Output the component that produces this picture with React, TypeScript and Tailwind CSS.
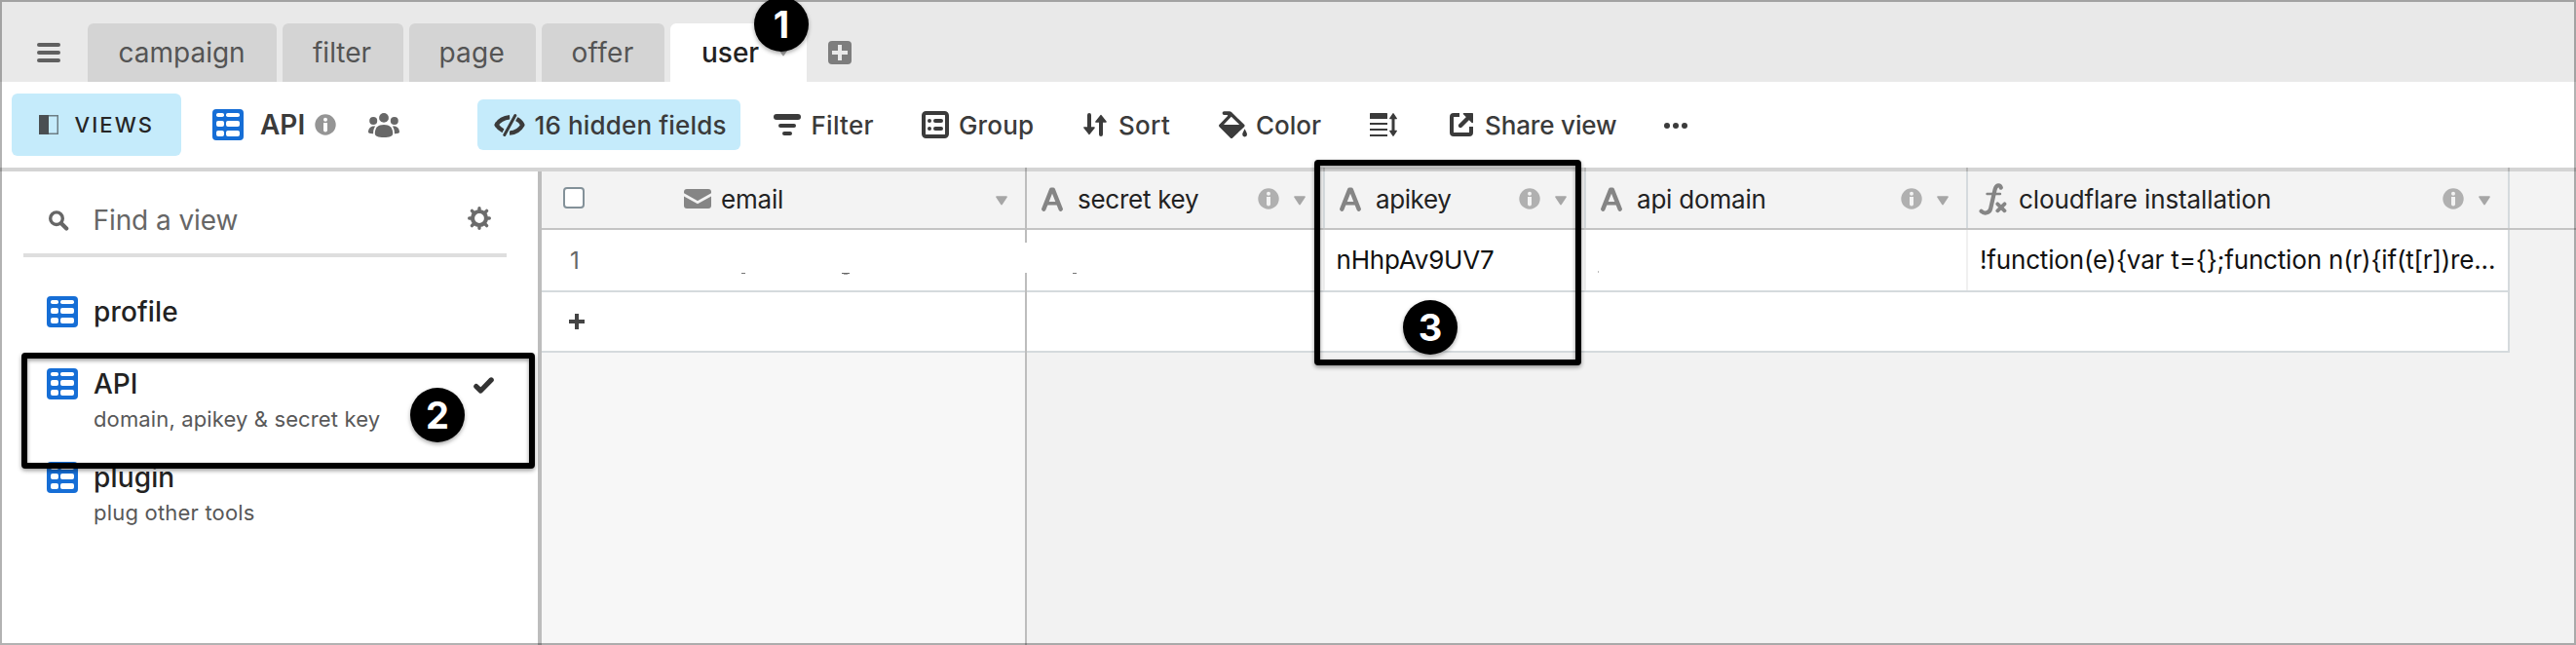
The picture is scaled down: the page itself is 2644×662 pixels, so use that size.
import React, { type ReactNode } from "react";

function TableIcon() {
  return (
    <svg width="32" height="32" viewBox="0 0 32 32" className="shrink-0">
      <rect width="32" height="32" rx="4" fill="#166ed6" />
      <g fill="#fff">
        <rect x="4" y="4" width="8" height="4" rx="1.8" />
        <rect x="14" y="4" width="14" height="4" rx="1.8" />
        <rect x="4" y="12" width="8" height="6" rx="2" />
        <rect x="14" y="12" width="14" height="6" rx="2" />
        <rect x="4" y="22" width="8" height="6" rx="2" />
        <rect x="14" y="22" width="14" height="6" rx="2" />
      </g>
    </svg>
  );
}

function InfoIcon({ color, ink }: { color: string; ink: string }) {
  return (
    <svg width="22" height="22" viewBox="0 0 22 22" className="shrink-0">
      <circle cx="11" cy="11" r="10.7" fill={color} />
      <circle cx="11" cy="5.8" r="2" fill={ink} />
      <path d="M9 9h4v7.6a2 2 0 0 1-4 0z" fill={ink} />
    </svg>
  );
}

function Caret() {
  return (
    <svg width="12" height="10" viewBox="0 0 12 10" className="shrink-0">
      <path d="M1 .3h10c.8 0 1.1.7.7 1.3L6.9 8.8c-.5.8-1.3.8-1.8 0L.3 1.6C-.1 1 .2.3 1 .3z" fill="#a6a6a6" />
    </svg>
  );
}

function TextFieldIcon() {
  return (
    <svg width="22" height="25" viewBox="0 0 22 25" className="mb-[2px] shrink-0" fill="none" stroke="#858585" strokeWidth="4.4" strokeLinecap="round" strokeLinejoin="round">
      <path d="M2.3 22.6 10.2 2.6h1.6l7.9 20" />
      <path d="M5.5 16.8h11" strokeWidth="3.6" />
    </svg>
  );
}

function FormulaIcon() {
  return (
    <svg width="29" height="33" viewBox="0 0 29 33" className="mb-[1px] shrink-0" fill="none" stroke="#858585" strokeLinecap="round">
      <path d="M22.8 4.6C22 1.6 18 .8 16.6 6.5L12.2 26C11.2 30.6 6 32 2.6 28.8" strokeWidth="4.2" />
      <path d="M8.5 11h13.5" strokeWidth="2.4" />
      <path d="m19.3 21.3 7.2 7M26.5 21.3l-7.2 7" strokeWidth="3.8" />
    </svg>
  );
}

function Tab({ label, className }: { label: string; className: string }) {
  return (
    <div className={`flex h-[60px] shrink-0 items-center rounded-t-[6px] text-[28px] ${className}`}>
      <span>{label}</span>
    </div>
  );
}

function Tool({ icon, label, className, textClass }: { icon: ReactNode; label?: string; className: string; textClass?: string }) {
  return (
    <div className={`flex shrink-0 items-center whitespace-nowrap text-[26px] font-medium text-[#3b3b3b] ${className}`}>
      {icon}
      {label && <span className={textClass}>{label}</span>}
    </div>
  );
}

function HeaderCell({ icon, label, className, labelClass }: { icon: ReactNode; label: string; className: string; labelClass: string }) {
  return (
    <div className={`relative flex h-[58px] shrink-0 items-center border-r-2 border-[#d5dadd] pr-[18px] text-[26px] text-[#222] ${className}`}>
      <span className="absolute -top-1 -right-0.5 h-1 w-0.5 bg-black/15" />
      {icon}
      <span className={`mb-[2px] flex-1 whitespace-nowrap ${labelClass}`}>{label}</span>
      <span className="mb-[3px] mr-[15px] flex">
        <InfoIcon color="#b0b0b0" ink="#f3f3f3" />
      </span>
      <span className="mt-[2px] flex">
        <Caret />
      </span>
    </div>
  );
}

function ViewItem({ name, note, nameClass, noteClass, className, checked }: { name: string; note?: string; nameClass: string; noteClass?: string; className: string; checked?: boolean }) {
  return (
    <div className={`relative shrink-0 ${className}`}>
      <div className="flex h-8 items-center">
        <TableIcon />
        <span className={`ml-4 flex-1 text-[28px] font-medium text-[#222] ${nameClass}`}>{name}</span>
        {checked && (
          <svg width="21" height="17" viewBox="0 0 21 17" className="mr-[45px] mt-[3px]" fill="none" stroke="#333" strokeWidth="5.2" strokeLinecap="round" strokeLinejoin="round">
            <path d="M2.8 9.6 7.4 14 18.2 2.9" />
          </svg>
        )}
      </div>
      {note && <div className={`ml-12 mt-1 h-8 text-[22px] leading-8 text-[#585858] ${noteClass}`}>{note}</div>}
    </div>
  );
}

function Badge({ n, className }: { n: number; className: string }) {
  return (
    <div className={`absolute z-20 flex h-14 w-14 items-center justify-center rounded-full bg-black text-[38px] font-bold text-white shadow-[0_2px_4px_rgba(0,0,0,0.35)] ${className}`}>
      {n}
    </div>
  );
}

function Highlight({ className }: { className: string }) {
  return <div className={`absolute z-10 rounded-[4px] border-[6px] border-black drop-shadow-[0_2px_2px_rgba(0,0,0,0.4)] ${className}`} />;
}

export default function App() {
  return (
    <div className="relative flex h-[662px] w-[2644px] flex-col overflow-hidden bg-white font-['Inter',sans-serif]">
      <div className="flex h-[84px] shrink-0 items-end bg-[#e9e9e9] text-[#545454]">
        <div className="flex h-[60px] w-[90px] items-center pl-[38px]">
          <svg width="24" height="20" viewBox="0 0 24 20" fill="#606060">
            <rect width="24" height="4" rx="2" />
            <rect y="8" width="24" height="4" rx="2" />
            <rect y="16" width="24" height="4" rx="2" />
          </svg>
        </div>
        <div className="flex gap-[6px]">
          <Tab label="campaign" className="w-[194px] bg-[#d4d4d4] pl-[31.5px]" />
          <Tab label="filter" className="w-[124px] bg-[#d4d4d4] pl-[31px]" />
          <Tab label="page" className="w-[130px] bg-[#d4d4d4] pl-[30.5px] tracking-[0.2px]" />
          <Tab label="offer" className="w-[126px] bg-[#d4d4d4] pl-[30.5px] tracking-[0.3px]" />
          <div className="relative">
            <Tab label="user" className="w-[140px] bg-white pl-[32px] font-medium text-[#222]" />
            <span className="absolute left-[110px] top-[24px] flex">
              <Caret />
            </span>
            <Badge n={1} className="-top-[27px] left-[86px]" />
          </div>
        </div>
        <div className="ml-[22px] flex h-[60px] items-center">
          <svg width="24" height="24" viewBox="0 0 24 24">
            <rect width="24" height="24" rx="4" fill="#7d7d7d" />
            <path d="M12 4v16M4 12h16" stroke="#e9e9e9" strokeWidth="4" />
          </svg>
        </div>
      </div>

      <div className="flex h-[92px] shrink-0 items-center border-b-4 border-[#d4d4d4] bg-white pl-3">
        <div className="flex h-16 w-[174px] items-center rounded-[6px] bg-[#c5ebfb] pl-7">
          <svg width="20" height="20" viewBox="0 0 20 20">
            <rect x="0.75" y="0.75" width="18.5" height="18.5" fill="none" stroke="#6c7d84" strokeWidth="1.5" />
            <rect width="10" height="20" rx="0.5" fill="#4a4f52" />
          </svg>
          <span className="ml-[16.5px] text-[22px] font-medium tracking-[2.1px] text-[#262626]">VIEWS</span>
        </div>
        <div className="ml-8 flex w-[160px] items-center">
          <TableIcon />
          <span className="ml-[17px] w-[56px] text-[28px] font-semibold text-[#3b3b3b]">API</span>
          <InfoIcon color="#959595" ink="#fff" />
        </div>
        <div className="w-[112px]">
          <svg width="32" height="25" viewBox="0 0 32 25" fill="#676767">
            <circle cx="16" cy="4.9" r="4.9" />
            <circle cx="5.2" cy="8" r="4" />
            <circle cx="26.8" cy="8" r="4" />
            <path d="M16 12c6 0 9.2 3.2 9.2 9 0 2.8-3.2 4-9.2 4s-9.2-1.2-9.2-4c0-5.8 3.2-9 9.2-9z" />
            <path d="M7.2 13.6C3 12.8 0 15.5 0 19.6c0 1.4 2 1.8 5.1 1.7 0-3.2.5-5.5 2.1-7.7z" />
            <path d="M24.8 13.6c4.2-.8 7.2 1.9 7.2 6 0 1.4-2 1.8-5.1 1.7 0-3.2-.5-5.5-2.1-7.7z" />
          </svg>
        </div>
        <Tool
          className="h-[52px] w-[270px] rounded-[6px] bg-[#c5ebfb] pl-[17px]"
          label="16 hidden fields"
          textClass="ml-[9.5px] tracking-[0.15px]"
          icon={
            <svg width="32" height="23" viewBox="0 0 32 23" fill="none" stroke="#3b3b3b" strokeWidth="4.4">
              <path d="M16.2 3.2C10.5 3.8 5 6.8 2.6 11.2c1.6 2.7 4 4.6 7 6.2" strokeLinejoin="round" />
              <path d="M22.5 4.8c3.2 1.4 5.5 3.6 6.9 6.4-2.6 4.7-7.4 8-13.4 8.3" strokeLinejoin="round" />
              <path d="M21.8 1.6 10.8 21.4" stroke="#c5ebfb" strokeWidth="6" />
              <path d="M21.8 1.6 10.8 21.4" strokeWidth="3" strokeLinecap="round" />
            </svg>
          }
        />
        <Tool
          className="ml-[34px] w-[152px]"
          label="Filter"
          textClass="ml-[10.5px] tracking-[0.26px]"
          icon={
            <svg width="28" height="22" viewBox="0 0 28 22" fill="#3b3b3b">
              <rect width="28" height="6" rx="3" />
              <rect x="5" y="10" width="18" height="4" rx="2" />
              <rect x="9" y="18" width="10" height="4" rx="2" />
            </svg>
          }
        />
        <Tool
          className="w-[166px]"
          label="Group"
          textClass="ml-[10px] tracking-[0.16px]"
          icon={
            <svg width="28" height="28" viewBox="0 0 28 28" fill="#3b3b3b">
              <rect x="2" y="2" width="24" height="24" rx="2.5" fill="none" stroke="#3b3b3b" strokeWidth="4" />
              <circle cx="8" cy="10" r="2" />
              <circle cx="8" cy="18" r="2" />
              <rect x="12" y="8" width="10" height="4" rx="2" />
              <rect x="12" y="16" width="10" height="4" rx="2" />
            </svg>
          }
        />
        <Tool
          className="w-[139px]"
          label="Sort"
          textClass="ml-[12px] tracking-[0.3px]"
          icon={
            <svg width="24" height="24" viewBox="0 0 24 24" fill="#3b3b3b" stroke="#3b3b3b" strokeLinecap="round" strokeLinejoin="round">
              <path d="M6 2v15M18 22V8" strokeWidth="4" />
              <path d="M1 15h10L6 21.3zM13 9h10l-5-6.3z" strokeWidth="1.6" />
            </svg>
          }
        />
        <Tool
          className="w-[155px]"
          label="Color"
          textClass="ml-[9px]"
          icon={
            <svg width="29" height="28" viewBox="0 0 29 28" fill="#3b3b3b">
              <path d="M5.5.2h5.3c1 0 1.7.3 2.4 1L26 13.8c.8.8.8 1.6 0 2.4L14.2 27.4c-.8.8-1.6.8-2.4 0L.6 16.2c-.8-.8-.8-1.6 0-2.4L9.3 4.7 8.6 4H5.5a1.9 1.9 0 0 1 0-3.8zM12.8 5.8 5 14h16.2z" />
              <path d="M26.6 18.2c1.5 2.8 2.4 4.4 2.4 5.8a2.4 2.4 0 0 1-4.8 0c0-1.4.9-3 2.4-5.8z" />
            </svg>
          }
        />
        <Tool
          className="w-[82px]"
          icon={
            <svg width="28" height="24" viewBox="0 0 28 24" fill="#3b3b3b">
              <rect width="18" height="6" rx="0.5" />
              <rect y="10" width="18" height="2" />
              <rect y="16" width="18" height="2" />
              <rect y="22" width="18" height="2" />
              <path d="M22.5 4h3v16h-3z" />
              <path d="M20.8 5.6 24 .8l3.2 4.8zM20.800 18.400l3.200 4.800 3.200-4.800z" stroke="#3b3b3b" strokeWidth="1.4" strokeLinejoin="round" />
            </svg>
          }
        />
        <Tool
          className="w-[220px]"
          label="Share view"
          textClass="ml-[12px] tracking-[-0.14px]"
          icon={
            <svg width="24" height="24" viewBox="0 0 24 24" fill="none" stroke="#3b3b3b" strokeWidth="4">
              <path d="M10 2H4a2 2 0 0 0-2 2v16a2 2 0 0 0 2 2h16a2 2 0 0 0 2-2v-6" />
              <path d="m11 13 8-8" strokeWidth="4.4" strokeLinecap="round" />
              <path d="M14.5.8h8.700v8.700z" fill="#3b3b3b" strokeWidth="1.6" strokeLinejoin="round" />
            </svg>
          }
        />
        <Tool
          className="w-6"
          icon={
            <svg width="24" height="6" viewBox="0 0 24 6" fill="#3b3b3b" className="mt-[2px]">
              <circle cx="3" cy="3" r="3" />
              <circle cx="12" cy="3" r="3" />
              <circle cx="21" cy="3" r="3" />
            </svg>
          }
        />
      </div>

      <div className="flex min-h-0 flex-1">
        <aside className="relative flex w-[556px] shrink-0 flex-col border-r-4 border-[#bdbdbd] bg-white pl-6">
          <div className="flex h-[88px] w-[496px] items-center border-b-4 border-[#dedede] pl-[26px] pt-[12px]">
            <svg width="21" height="21" viewBox="0 0 21 21" className="mt-[5px]" fill="none" stroke="#666">
              <circle cx="8" cy="8.2" r="6.3" strokeWidth="3.4" />
              <path d="m13.2 13.4 5 5" strokeWidth="4.2" strokeLinecap="round" />
            </svg>
            <span className="ml-[24.5px] mt-[3px] flex-1 text-[28px] tracking-[-0.08px] text-[#666]">Find a view</span>
            <svg width="24" height="24" viewBox="-12 -12 24 24" className="mr-[16px]" fill="none" stroke="#6b6b6b">
              <circle r="7" strokeWidth="4.2" />
              <path d="M0-8.5V-10.300M0 8.500v1.800M-8.500 0h-1.800M8.500 0h1.800M-6-6l-1.600-1.600M6-6l1.600-1.600M-6 6l-1.600 1.600M6 6l1.600 1.600" strokeWidth="3.4" strokeLinecap="round" />
            </svg>
          </div>
          <div className="flex flex-col pl-6 pt-10">
            <ViewItem name="profile" nameClass="tracking-[0.15px]" className="h-[74px]" />
            <ViewItem name="API" nameClass="" note="domain, apikey & secret key" noteClass="tracking-[0.13px]" className="h-24" checked />
            <ViewItem name="plugin" nameClass="tracking-[0.15px]" note="plug other tools" noteClass="tracking-[0.2px]" className="h-24" />
          </div>
          <Highlight className="left-[22px] top-[186px] h-[119px] w-[527px]" />
          <Badge n={2} className="left-[421px] top-[222px]" />
        </aside>

        <section className="relative flex w-[498px] shrink-0 flex-col border-r-2 border-[#bdbdbd] bg-[#f7f7f7]">
          <span className="absolute -right-0.5 -top-1 h-1 w-0.5 bg-black/20" />
          <div className="flex h-[60px] shrink-0 items-center border-b-2 border-[#c4c4c4] bg-[#f3f3f3] pl-[22px] pr-[18px]">
            <span className="mb-[4px] h-[22px] w-[22px] rounded-[4px] border-2 border-[#839199] bg-white" />
            <svg width="28" height="20" viewBox="0 0 28 20" className="mb-[2px] ml-[102px]">
              <rect width="28" height="20" rx="3" fill="#858585" />
              <path d="M-1 5.2 14 13.7 29 5.2" fill="none" stroke="#f3f3f3" strokeWidth="2.8" />
            </svg>
            <span className="mb-[2px] ml-[10px] flex-1 text-[26px] tracking-[-0.2px] text-[#222]">email</span>
            <span className="mt-[2px] flex">
              <Caret />
            </span>
          </div>
          <div className="relative flex h-16 shrink-0 items-center border-b-2 border-[#d5dadd] bg-white pl-[29px]">
            <span className="mt-[2px] text-[24px] text-[#666]">1</span>
            <span className="absolute left-[205px] top-[44px] h-px w-1 bg-[#777]" />
            <span className="absolute left-[308px] top-[44px] h-px w-2 bg-[#666]" />
            <span className="absolute left-[310px] top-[45px] h-px w-1 bg-[#aaa]" />
            <span className="absolute -right-0.5 top-[13px] h-[31px] w-0.5 bg-white" />
          </div>
          <div className="flex h-[62px] shrink-0 items-center border-b-2 border-[#d5dadd] bg-white pl-[28px]">
            <svg width="16" height="16" viewBox="0 0 16 16">
              <path d="M8 0v16M0 8h16" stroke="#444" strokeWidth="4" />
            </svg>
          </div>
        </section>

        <section className="relative flex flex-1 flex-col bg-[#f2f2f2]">
          <div className="flex h-[60px] shrink-0 border-b-2 border-[#c4c4c4] bg-[#f3f3f3]">
            <HeaderCell icon={<TextFieldIcon />} label="secret key" className="w-[306px] pl-[15px]" labelClass="ml-[15px] tracking-[-0.27px]" />
            <HeaderCell icon={<TextFieldIcon />} label="apikey" className="w-[268px] pl-[15px]" labelClass="ml-[15px] tracking-[-0.4px]" />
            <HeaderCell icon={<TextFieldIcon />} label="api domain" className="w-[392px] pl-[15px]" labelClass="ml-[15px] tracking-[-0.2px]" />
            <HeaderCell icon={<FormulaIcon />} label="cloudflare installation" className="w-[556px] pl-[11px]" labelClass="ml-[12px] tracking-[-0.12px]" />
          </div>
          <div className="flex h-16 w-[1522px] shrink-0 border-b-2 border-r-2 border-[#d5dadd] bg-white text-[26px] text-[#111]">
            <div className="relative w-[306px] shrink-0 border-r-2 border-[#f0f0f0]">
              <span className="absolute left-[47px] top-[44px] h-px w-1 bg-[#777]" />
            </div>
            <div className="flex w-[268px] shrink-0 items-center border-r-2 border-[#f0f0f0] pb-[1px] pl-[11.5px] tracking-[-0.2px]">nHhpAv9UV7</div>
            <div className="relative w-[392px] shrink-0 border-r-2 border-[#f0f0f0]">
              <span className="absolute left-3 top-[42px] h-[2px] w-px bg-[#bbb]" />
            </div>
            <div className="flex min-w-0 flex-1 items-center whitespace-nowrap pb-[1px] pl-3 tracking-[-0.17px]">
              {"!function(e){var t={};function n(r){if(t[r])re..."}
            </div>
          </div>
          <div className="h-[62px] w-[1522px] shrink-0 border-b-2 border-r-2 border-[#d5dadd] bg-white" />
          <Highlight className="-top-[12px] left-[295px] h-[211px] w-[274px]" />
          <Badge n={3} className="left-[386px] top-[132px]" />
        </section>
      </div>

      <div className="pointer-events-none absolute inset-0 z-[5] border-2 border-black/30" />
    </div>
  );
}
